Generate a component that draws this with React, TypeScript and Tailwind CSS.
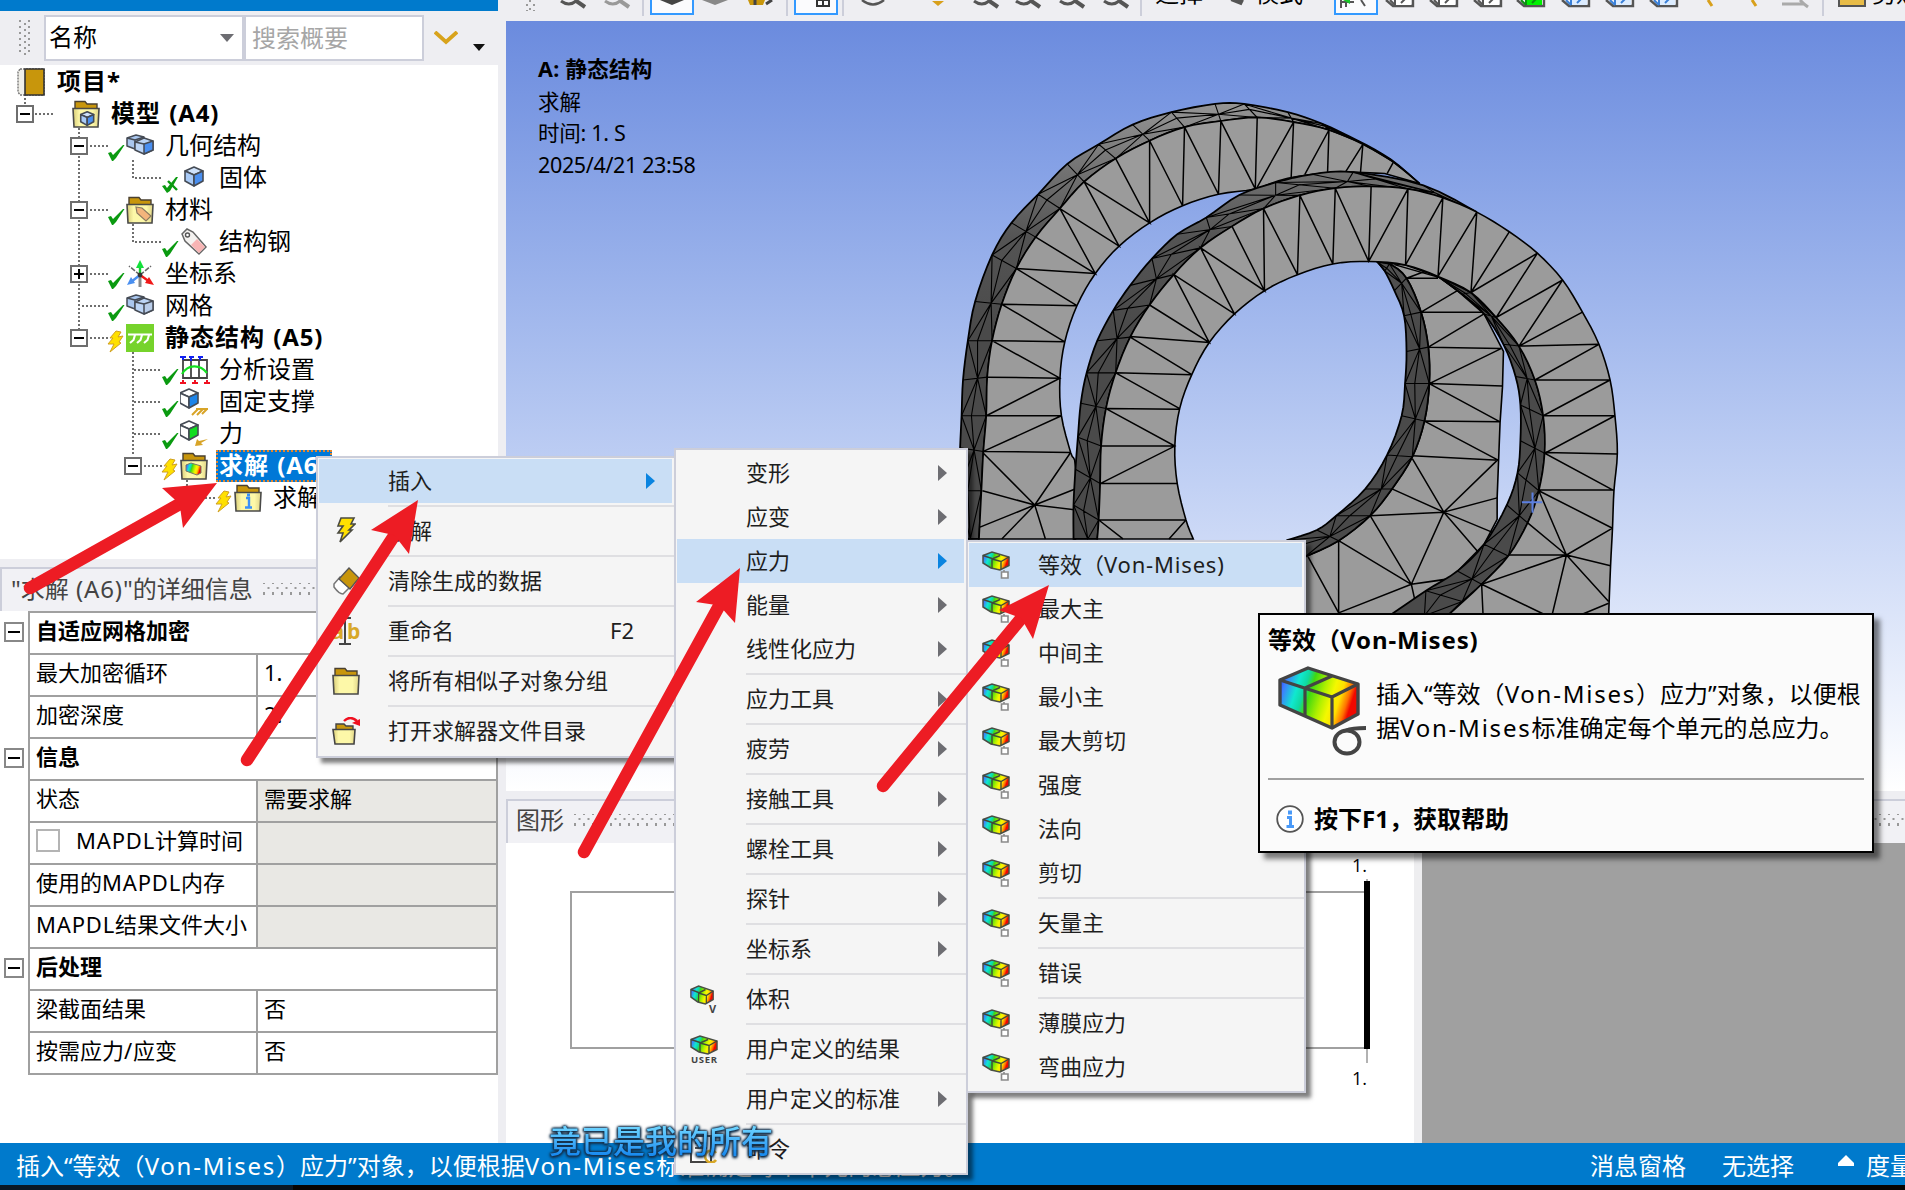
import React from "react";

type Pt = [number, number];

const pts = (list: Pt[]) => list.map((p) => p.join(",")).join(" ");

/** Sets runs of Latin letters slightly wider than the Chinese text around them. */
function Mixed({ text, loose = false }: { text: string; loose?: boolean }) {
  return (
    <>
      {text.split(/([A-Za-z0-9()*/.\- ]+)/).map((part, i) =>
        i % 2 ? (
          <span key={i} className={loose ? "tracking-[0.074em] whitespace-pre" : "tracking-[0.037em] whitespace-pre"}>{part}</span>
        ) : (
          part
        )
      )}
    </>
  );
}

/* ---------- small drawings ---------- */

function Defs() {
  return (
    <svg className="absolute h-0 w-0" aria-hidden="true">
      <defs>
        <linearGradient id="contour" x1="0" y1="0" x2="1" y2="0.25">
          <stop offset="0" stopColor="#1b2cf0" />
          <stop offset="0.12" stopColor="#3f7bff" />
          <stop offset="0.28" stopColor="#10e8d0" />
          <stop offset="0.38" stopColor="#10d8a0" />
          <stop offset="0.46" stopColor="#40d810" />
          <stop offset="0.62" stopColor="#b0f000" />
          <stop offset="0.74" stopColor="#f4f800" />
          <stop offset="0.84" stopColor="#ffe000" />
          <stop offset="0.94" stopColor="#ff7000" />
          <stop offset="1" stopColor="#f00800" />
        </linearGradient>
        <linearGradient id="paper" x1="0" y1="0" x2="1" y2="0">
          <stop offset="0" stopColor="#d8cc78" />
          <stop offset="0.25" stopColor="#fdf8a8" />
          <stop offset="0.75" stopColor="#fdf8a8" />
          <stop offset="1" stopColor="#e0d488" />
        </linearGradient>
      </defs>
    </svg>
  );
}

function ContourCube({ mark }: { mark?: string }) {
  const s = mark === "v" ? "translate(0 0) scale(0.86 1)" : undefined;
  return (
    <svg viewBox="0 0 28 28" className="h-7 w-7">
      <g transform={s}>
        <path d="M1 4.5 L10 1 L27 6 V14.5 L18 19 L9 17 L1 12 Z" fill="url(#contour)" stroke="#4a4f45" strokeWidth="1.5" />
        <path d="M1 4.5 L10 7.5 M10 17 V8 L18 4.5 M10 8 L19 10.5 L27 6 M19 10.5 V18" fill="none" stroke="#3f4a3a" strokeWidth="1.4" />
      </g>
      {mark === "box" && <path d="M19.5 21 H26 V27 H19.5 Z M22 19 V21" fill="#fff" stroke="#8a8a8a" strokeWidth="1.6" />}
      {mark === "v" && (
        <text x="19" y="28" fontSize="11" fontWeight="700" fontFamily="Open Sans" fill="#444">V</text>
      )}
      {mark === "user" && (
        <text x="1" y="28" fontSize="9.5" fontWeight="700" fontFamily="Open Sans" textLength="26" fill="#444">USER</text>
      )}
    </svg>
  );
}

function Folder({ children }: { children?: React.ReactNode }) {
  return (
    <svg viewBox="0 0 28 28" className="h-7 w-7">
      <path d="M3 8 V1.5 H13 L15 4 H25 V8" fill="#c8960c" stroke="#4a4030" strokeWidth="1.4" />
      <path d="M1 8.5 H27 L26 27 H2 Z" fill="url(#paper)" stroke="#4a4a48" strokeWidth="1.6" />
      {children}
    </svg>
  );
}

function Cube({ x = 0, y = 0, s = 1, top = "#cfe2fb", left = "#a9cbf8", right = "#4a8ff0" }: {
  x?: number; y?: number; s?: number; top?: string; left?: string; right?: string;
}) {
  return (
    <g transform={`translate(${x} ${y}) scale(${s})`} stroke="#454b55" strokeWidth={1.6 / s} strokeLinejoin="round">
      <path d="M1 5 L10 1 L19 5 L10 9 Z" fill={top} />
      <path d="M1 5 L10 9 V20 L1 15 Z" fill={left} />
      <path d="M19 5 L10 9 V20 L19 15 Z" fill={right} />
    </g>
  );
}

function TwinCubes({ pale = false }: { pale?: boolean }) {
  const right = pale ? "#b9cdea" : "#4a8ff0";
  return (
    <svg viewBox="0 0 28 28" className="h-7 w-7">
      <g stroke="#454b55" strokeWidth="1.5" strokeLinejoin="round">
        <path d="M1 6 L10 3 L18 5 V14 L9 17 L1 14 Z" fill="#a9c6ee" />
        <path d="M1 6 L9 8 L18 5 M9 8 V17" fill="none" />
        <path d="M9 10 L18 6 L27 9 V18 L18 22 L9 18 Z" fill="#bcd5f6" />
        <path d="M18 12 L27 9 V18 L18 22 Z" fill={right} />
        <path d="M9 10 L18 12" fill="none" />
      </g>
    </svg>
  );
}

const treeIcons: Record<string, React.ReactNode> = {
  book: (
    <svg viewBox="0 0 28 28" className="h-7 w-7">
      <path d="M3 1 H27 V27 H3 L1 24 V4 Z" fill="#f0efe8" stroke="#777" strokeWidth="1.4" strokeDasharray="2 1" />
      <path d="M8 1 H27 V27 H8 Z" fill="#c8960c" stroke="#333" strokeWidth="1.6" />
    </svg>
  ),
  model: <Folder><Cube x={8} y={11} s={0.72} /></Folder>,
  geometry: <TwinCubes />,
  solid: <svg viewBox="0 0 28 28" className="h-7 w-7"><Cube x={4} y={2} s={1} /></svg>,
  material: (
    <Folder>
      <path d="M10 11 L16 12 L25 20 L20 25 L11 17 Z" fill="#f3b57c" stroke="#8a7a60" strokeWidth="1.2" />
    </Folder>
  ),
  tag: (
    <svg viewBox="0 0 28 28" className="h-7 w-7">
      <path d="M2 6 L7 1 L13 4 L26 19 L19 26 L5 13 Z" fill="#f4f2f0" stroke="#666" strokeWidth="1.5" />
      <path d="M17 11 L25 19 L19 25 L11 17 Z" fill="#f7b4b4" />
      <circle cx="7.5" cy="7" r="2" fill="#fff" stroke="#555" strokeWidth="1.4" />
    </svg>
  ),
  axes: (
    <svg viewBox="0 0 28 28" className="h-7 w-7">
      <path d="M14 15 V5 M14 15 L3 6 M14 15 L25 6" stroke="#666" strokeWidth="1.6" strokeDasharray="5 1.5" />
      <path d="M14 15 V27" stroke="#888" strokeWidth="3" />
      <path d="M14 15 V6" stroke="#16c832" strokeWidth="2.4" />
      <path d="M14 0 L18 8 H10 Z" fill="#12e03a" />
      <path d="M14 15 L24 22" stroke="#f01818" strokeWidth="2.4" />
      <path d="M28 25 L19 23 L23 17 Z" fill="#f01818" />
      <path d="M14 15 L5 22" stroke="#4a8ff0" strokeWidth="2.4" />
      <path d="M1 25 L9 23 L5 17 Z" fill="#4a8ff0" />
      <circle cx="14" cy="15" r="2.4" fill="#333" />
    </svg>
  ),
  mesh: <TwinCubes pale />,
  statics: (
    <svg viewBox="0 0 28 28" className="h-7 w-7">
      <rect width="28" height="28" fill="#76d32b" />
      <path d="M2 10.5 H26 M9 11 L7.5 16 L4 19 M16 11 L14.5 16 L11 19 M23 11 L21.5 16 L18 19" fill="none" stroke="#fff" strokeWidth="2.1" />
    </svg>
  ),
  analysis: (
    <svg viewBox="0 0 30 28" className="h-7 w-[30px]">
      <path d="M3 4 V22 H27 V4 Z M11 4 V22 M19 4 V22" fill="none" stroke="#444" strokeWidth="1.8" />
      <path d="M0 1 H6 M9 1 H14 M18 1 H23 M3 1 V4 M11 1 V5 M20 1 V4" stroke="#1020f0" strokeWidth="2" />
      <path d="M2 18 C8 8 20 8 27 17" fill="none" stroke="#12e020" strokeWidth="2.2" />
      <path d="M0 27 H6 M12 27 H18 M24 27 H30 M3 24 V27 M15 24 V27 M27 24 V27" stroke="#f01020" strokeWidth="2" />
    </svg>
  ),
  fixed: (
    <svg viewBox="0 0 28 28" className="h-7 w-7">
      <Cube x={-1} y={0} top="#fff" left="#fff" right="#1d84e8" />
      <path d="M12 27 L18 21 M17 27 L23 21 M22 26 L27 21 M16 21 H28" stroke="#d8a428" strokeWidth="2" />
    </svg>
  ),
  force: (
    <svg viewBox="0 0 28 28" className="h-7 w-7">
      <Cube x={-1} y={0} top="#fff" left="#fff" right="#10dc20" />
      <path d="M15 26 L17 19 L19 21 L28 19 L21 23 L23 25 Z" fill="#d8a428" />
    </svg>
  ),
  solve: (
    <Folder>
      <path d="M6 13 L11 11 L21 14 V21 L17 23 L6 19 Z" fill="url(#contour)" stroke="#776" strokeWidth="1" />
    </Folder>
  ),
  info: (
    <Folder>
      <path d="M12 14 H15 V23 M11 23.5 H18" stroke="#3a90f8" strokeWidth="2.4" fill="none" />
      <rect x="13" y="9.5" width="3" height="3" fill="#3a90f8" />
    </Folder>
  ),
};

function Bolt({ outlined = false }: { outlined?: boolean }) {
  return outlined ? (
    <svg viewBox="0 0 20 26" className="h-[26px] w-5">
      <path d="M5 1 H18 L15 7 H19 L13 13 H16 L4 25 L7 16 H2 L7 9 H2 Z" fill="#ffe000" stroke="#4a4a40" strokeWidth="1.6" />
    </svg>
  ) : (
    <svg viewBox="0 0 18 24" className="h-6 w-[18px]">
      <path d="M9 2 L14 3 L11 8 L16 7 L12 13 L14 14 L3 23 L7 15 L1 15 L6 9 L3 9 Z" fill="#ffe000" stroke="#d0a020" />
    </svg>
  );
}

const statusMarks: Record<string, React.ReactNode> = {
  check: (
    <svg viewBox="0 0 18 18" className="mt-3.5 h-[18px] w-[18px]">
      <path d="M0 9 L3 8 L5 11 L15 1 L16.5 1 L8 14 L5 17 L4 17 Z" fill="#0a9a10" />
    </svg>
  ),
  cross: (
    <svg viewBox="0 0 18 18" className="mt-3.5 h-[18px] w-[18px]">
      <path d="M0 10 L3 9 L5 12 L14 1 L16 1 L8 15 L5 17 Z" fill="#0a9a10" />
      <path d="M6 5 L15 14" stroke="#0a9a10" strokeWidth="2.4" />
    </svg>
  ),
  bolt: <div className="mt-1.5 -ml-px"><Bolt /></div>,
};

/* ---------- tree ---------- */

interface Node { level: number; text: string; icon: string; status?: string; toggle?: string; bold?: boolean; selected?: boolean }

const nodes: Node[] = [
  { level: 1, text: "模型 (A4)", icon: "model", toggle: "-", bold: true },
  { level: 2, text: "几何结构", icon: "geometry", status: "check", toggle: "-" },
  { level: 3, text: "固体", icon: "solid", status: "cross" },
  { level: 2, text: "材料", icon: "material", status: "check", toggle: "-" },
  { level: 3, text: "结构钢", icon: "tag", status: "check" },
  { level: 2, text: "坐标系", icon: "axes", status: "check", toggle: "+" },
  { level: 2, text: "网格", icon: "mesh", status: "check" },
  { level: 2, text: "静态结构 (A5)", icon: "statics", status: "bolt", toggle: "-", bold: true },
  { level: 3, text: "分析设置", icon: "analysis", status: "check" },
  { level: 3, text: "固定支撑", icon: "fixed", status: "check" },
  { level: 3, text: "力", icon: "force", status: "check" },
  { level: 3, text: "求解 (A6)", icon: "solve", status: "bolt", toggle: "-", bold: true, selected: true },
  { level: 4, text: "求解方案信息", icon: "info", status: "bolt" },
];

function Toggle({ sign }: { sign: string }) {
  return (
    <svg viewBox="0 0 18 18" className="h-[18px] w-[18px] shrink-0">
      <rect x="1" y="1" width="16" height="16" fill="#fff" stroke="#6e6e6e" strokeWidth="2" />
      <path d={sign === "+" ? "M4 9 H14 M9 4 V14" : "M4 9 H14"} stroke="#000" strokeWidth="2" />
    </svg>
  );
}

function TreeRow({ node }: { node: Node }) {
  return (
    <div className="flex h-8 items-center whitespace-nowrap" style={{ paddingLeft: 16 + 54 * (node.level - 1) }}>
      <div className="w-[38px] shrink-0">{node.toggle && <Toggle sign={node.toggle} />}</div>
      <div className="flex h-8 w-[18px] shrink-0 items-center">{node.status && statusMarks[node.status]}</div>
      <div className="w-7 shrink-0">{treeIcons[node.icon]}</div>
      <div
        className={
          node.selected
            ? "ml-2 flex h-8 w-[116px] items-center border-2 border-dotted border-[#e8862a] bg-[#0078d7] pb-0.5 pl-px font-bold tracking-[1px] text-white"
            : node.bold
              ? "ml-[11px] pb-0.5 font-bold tracking-[1px]"
              : "ml-[11px] pb-0.5"
        }
      >
        <span className="[word-spacing:1px]"><Mixed text={node.text} /></span>
      </div>
    </div>
  );
}

function Outline() {
  return (
    <div className="flex h-[559px] flex-col bg-white">
      <div className="h-[11px] shrink-0 bg-[#007acc]" />
      <div className="flex h-[54px] shrink-0 items-start bg-[#eeeef2] pt-1 text-[24px]">
        <svg viewBox="0 0 12 38" className="mt-1 ml-[19px] h-[38px] w-3">
          {[0, 1, 2, 3, 4, 5].map((i) => (
            <g key={i} fill="#999">
              <rect x="0" y={1 + i * 6} width="2" height="2" />
              <rect x="9" y={1 + i * 6} width="2" height="2" />
              <rect x="5" y={4 + i * 6} width="2" height="2" />
            </g>
          ))}
        </svg>
        <div className="ml-[13px] flex h-[46px] w-[200px] items-center justify-between border-2 border-[#ccceda] bg-white pr-2 pl-[3px]">
          <span className="pb-0.5">名称</span>
          <svg viewBox="0 0 14 8" className="h-2 w-3.5"><path d="M0 0 H14 L7 8 Z" fill="#6d6d72" /></svg>
        </div>
        <div className="flex h-[46px] w-[180px] items-center border-2 border-[#ccceda] bg-white pl-1.5 text-[#a6a6a6]">搜索概要</div>
        <svg viewBox="0 0 24 14" className="mt-4 ml-2.5 h-3.5 w-6"><path d="M1 1 L12 11 L23 1" fill="none" stroke="#d8a31c" strokeWidth="3.8" /></svg>
        <svg viewBox="0 0 12 7" className="mt-[29px] ml-[15px] h-[7px] w-3"><path d="M0 0 H12 L6 7 Z" fill="#111" /></svg>
      </div>
      <div className="relative flex-1 text-[24px] leading-8">
        <svg className="absolute top-0 left-0 h-[493px] w-[330px]" viewBox="0 65 330 493">
          <path
            d="M25 94 V104 M35 114 H54 M79 128 V330 M90 146 H108 M133 160 V178 H162 M90 210 H108 M133 224 V242 H162 M90 274 H108 M82 306 H108 M90 338 H108 M133 352 V456 M134 370 H162 M134 402 H162 M134 434 H162 M144 466 H162 M187 480 V498 H216"
            fill="none"
            stroke="#6e6e6e"
            strokeWidth="2"
            strokeDasharray="2 2"
          />
        </svg>
        <div className="relative pt-px">
          <div className="flex h-8 items-center pl-[17px] font-bold">
            {treeIcons.book}
            <span className="ml-3 pb-0.5 tracking-[1px]"><Mixed text="项目*" /></span>
          </div>
          {nodes.map((n) => <TreeRow key={n.text} node={n} />)}
        </div>
      </div>
    </div>
  );
}

/* ---------- details ---------- */

function Grip() {
  return (
    <svg className="h-3.5 min-w-0 flex-1">
      <defs>
        <pattern id="grip" width="9" height="12" patternUnits="userSpaceOnUse">
          <rect x="0" y="0" width="2" height="2" fill="#999" />
          <rect x="4.5" y="5" width="2" height="2" fill="#999" />
          <rect x="0" y="10" width="2" height="2" fill="#999" />
        </pattern>
      </defs>
      <rect width="100%" height="12" y="1" fill="url(#grip)" />
    </svg>
  );
}

type Row = { head: string } | { name: string; value: string; grey?: boolean; box?: boolean };

const rows: Row[] = [
  { head: "自适应网格加密" },
  { name: "最大加密循环", value: "1." },
  { name: "加密深度", value: "2." },
  { head: "信息" },
  { name: "状态", value: "需要求解", grey: true },
  { name: "MAPDL计算时间", value: "", grey: true, box: true },
  { name: "使用的MAPDL内存", value: "", grey: true },
  { name: "MAPDL结果文件大小", value: "", grey: true },
  { head: "后处理" },
  { name: "梁截面结果", value: "否" },
  { name: "按需应力/应变", value: "否" },
];

function Details() {
  return (
    <div className="flex flex-1 flex-col bg-white">
      <div className="h-2 shrink-0 bg-[#eeeef2]" />
      <div className="flex h-11 shrink-0 items-center border-t-2 border-l-2 border-[#ccceda] bg-[#f1f1f5] pb-[3px] pl-[9px] text-[24px] text-[#444]">
        <span className="mr-2.5 whitespace-nowrap"><Mixed text={'"求解 (A6)"的详细信息'} /></span>
        <Grip />
      </div>
      <div className="flex flex-col border-b-2 border-transparent text-[22px]">
        {rows.map((r, i) => (
          <div key={i} className="flex h-[42px]">
            <div className="flex w-7 shrink-0 items-center pl-1">
              {"head" in r && (
                <svg viewBox="0 0 20 20" className="-mt-px h-5 w-5">
                  <rect x="1" y="1" width="18" height="18" fill="#fff" stroke="#888" strokeWidth="2" />
                  <path d="M4 10 H16" stroke="#000" strokeWidth="2" />
                </svg>
              )}
            </div>
            {"head" in r ? (
              <div className="flex flex-1 items-center border-2 border-b-0 border-[#a0a0a0] pb-1.5 pl-1.5 font-bold">{r.head}</div>
            ) : (
              <>
                <div className="flex w-[228px] items-center border-t-2 border-l-2 border-[#a0a0a0] pb-1.5 pl-1.5 whitespace-nowrap">
                  {r.box && <span className="mr-4 h-[23px] w-6 border-2 border-[#b4b4b4]" />}
                  <span><Mixed text={r.name} /></span>
                </div>
                <div
                  className={
                    r.grey
                      ? "flex flex-1 items-center border-2 border-b-0 border-[#a0a0a0] bg-[#e9e8e4] pb-1.5 pl-1.5"
                      : "flex flex-1 items-center border-2 border-b-0 border-[#a0a0a0] pb-1.5 pl-1.5"
                  }
                >
                  {r.value}
                </div>
              </>
            )}
          </div>
        ))}
        <div className="ml-7 h-0.5 bg-[#a0a0a0]" />
      </div>
    </div>
  );
}

/* ---------- toolbar ---------- */

function Toolbar() {
  const lens = (x: number, c = "#555") => (
    <g key={x}>
      <path d={`M${x} 1 Q${x + 8} 7 ${x + 15} 1`} fill="none" stroke={c} strokeWidth="3" />
      <path d={`M${x + 14} 0 L${x + 24} 7`} stroke={c} strokeWidth="4" />
    </g>
  );
  const wire = (x: number, fill = "#fff", line = "#555") => (
    <g key={x}>
      <path d={`M${x} 0 L${x + 7} 6 H${x + 27} V-4`} fill="none" stroke="#555" strokeWidth="2.4" />
      <rect x={x + 8} y="-4" width="17" height="9" fill={fill} />
      <path d={`M${x + 9} 0 V5 M${x + 15} 3 L${x + 19} -1 M${x + 4} 0 L${x + 9} 5`} stroke={line} strokeWidth="2" />
    </g>
  );
  return (
    <div className="relative h-[21px] shrink-0 overflow-hidden bg-[#eeeef2]">
      <svg viewBox="498 0 1407 21" className="block h-[21px] w-[1407px]">
        <g fill="#999">
          <rect x="526" y="4" width="2" height="2" /><rect x="533" y="4" width="2" height="2" />
          <rect x="529" y="0" width="2" height="2" /><rect x="529" y="8" width="2" height="2" />
          <rect x="526" y="10" width="2" height="1" /><rect x="533" y="10" width="2" height="1" />
        </g>
        {lens(561)}
        {lens(605, "#999")}
        {[643, 787, 843, 1141, 1823].map((x) => <path key={x} d={`M${x} 0 V16`} stroke="#ccceda" strokeWidth="2" />)}
        {[651, 795, 1335].map((x) => <rect key={x} x={x} y="-4" width="42" height="18" fill="#fbfbfd" stroke="#3399ff" strokeWidth="2" />)}
        <path d="M660 0 L672 5 L684 0 Z" fill="#444" />
        <path d="M702 0 L715 5 L728 0 Z" fill="#888" />
        <path d="M748 0 L750 5 H763 L765 0 Z" fill="#c8960c" /><path d="M755 0 V5 M766 4 L772 0" stroke="#444" strokeWidth="3" />
        <path d="M817 -2 V6 H829 V-2 M817 0 H829 M823 -2 V6" fill="none" stroke="#333" strokeWidth="2" />
        <path d="M862 0 Q873 9 884 0" fill="none" stroke="#555" strokeWidth="2.4" />
        <path d="M932 1 H944 L938 6 Z" fill="#d8a01c" />
        {[974, 1016, 1060, 1104].map((x) => lens(x))}
        <path d="M1231 0 L1241 4 L1243 0" fill="#555" stroke="#555" strokeWidth="2" />
        <path d="M1341 0 V8 M1346 1 V7 M1340 2 H1354 M1361 0 L1365 6" stroke="#555" strokeWidth="2" />
        <path d="M1343 0 L1350 4 L1350 0 Z" fill="#18c828" />
        {[1386, 1430, 1474].map((x) => wire(x))}
        {wire(1517, "#00f000", "#0a9010")}
        {[1562, 1606, 1650].map((x) => wire(x, "#dcecff", "#3a80d8"))}
        <path d="M1708 0 L1712 6 M1752 0 L1756 6" stroke="#d8a01c" strokeWidth="3" />
        <path d="M1782 4 H1804 L1800 0 M1804 4 L1808 7" fill="none" stroke="#aaa" strokeWidth="3" />
        <rect x="1839" y="-6" width="26" height="12" fill="#e8bc48" stroke="#555" strokeWidth="2" />
      </svg>
      <div className="absolute -top-[23px] left-[657px] flex text-[24px] leading-8 whitespace-nowrap">
        <span className="w-[100px]">选择</span>
        <span className="w-[617px]">模式</span>
        <span>剪贴板</span>
      </div>
    </div>
  );
}

/* ---------- 3D model ---------- */

const backOuter: Pt[] = [[163, 1285], [168, 1150], [172, 1040], [178, 940], [180, 832], [190, 730], [210, 628], [240, 528], [280, 440], [330, 360], [380, 285], [445, 220], [515, 170], [587, 132], [662, 115], [737, 105], [812, 118], [885, 140], [955, 180], [1018, 230], [1072, 290]];
const backRim: Pt[] = [[118, 1285], [121, 1150], [124, 1030], [127, 940], [130, 840], [140, 730], [155, 620], [190, 490], [230, 400], [285, 320], [345, 235], [410, 180], [480, 125], [560, 90], [650, 67], [710, 67], [800, 90], [870, 122], [945, 170], [1012, 222], [1072, 290]];
const backInner: Pt[] = [[1000, 262], [900, 258], [800, 275], [733, 305], [657, 320], [583, 352], [515, 400], [452, 465], [403, 542], [365, 632], [340, 733], [330, 835], [333, 940], [352, 1043], [362, 1085], [362, 1285]];

const frontOuter: Pt[] = [[407, 1285], [410, 1232], [413, 1130], [415, 1025], [425, 920], [445, 820], [475, 720], [515, 630], [565, 545], [620, 470], [685, 410], [750, 360], [825, 323], [898, 303], [972, 298], [1048, 305], [1120, 330], [1190, 370]];
const frontRight: Pt[] = [[1190, 370], [1257, 425], [1315, 485], [1367, 560], [1408, 650], [1442, 740], [1465, 840], [1475, 940], [1480, 1045], [1473, 1150], [1470, 1255], [1466, 1360], [1462, 1500]];
const frontRim: Pt[] = [[358, 1285], [358, 1190], [362, 1090], [367, 1000], [373, 905], [385, 820], [407, 730], [440, 645], [475, 575], [520, 500], [572, 432], [632, 385], [700, 322], [775, 287], [850, 264], [935, 258], [1080, 295], [1190, 370]];
const holeEdge: Pt[] = [[1130, 1500], [1200, 1412], [1255, 1333], [1295, 1240], [1318, 1150], [1330, 1045], [1327, 940], [1310, 840], [1277, 745], [1230, 665], [1178, 595], [1110, 550], [1043, 518], [967, 508], [893, 515], [820, 545], [752, 590], [690, 655], [638, 735], [602, 825], [577, 920], [567, 1025], [572, 1130], [590, 1232], [605, 1285]];

const backHoleFace: Pt[] = [[985, 510], [1010, 515], [1045, 555], [1075, 650], [1090, 748], [1092, 850], [1082, 955], [1057, 1055], [1015, 1145], [970, 1220], [905, 1290], [836, 1335]];
const backHoleRim: Pt[] = [[985, 510], [1000, 535], [1020, 590], [1040, 660], [1045, 760], [1042, 850], [1035, 940], [1005, 1050], [960, 1145], [900, 1220], [860, 1260], [800, 1288]];
const frontHoleRim: Pt[] = [[1110, 550], [1160, 600], [1205, 655], [1245, 740], [1270, 830], [1280, 910], [1280, 1010], [1274, 1100], [1252, 1190], [1205, 1300], [1150, 1375], [1085, 1430], [1010, 1500]];
const frontHoleFace: Pt[] = [[1110, 550], [1178, 595], [1230, 665], [1277, 745], [1310, 840], [1327, 940], [1330, 1045], [1318, 1150], [1295, 1240], [1255, 1333], [1200, 1412], [1160, 1460], [1130, 1500]];

/** Catmull-Rom subdivision, so that the outlines read as curves. */
function smooth(p: Pt[]): Pt[] {
  const out: Pt[] = [];
  for (let i = 0; i < p.length - 1; i++) {
    const a = p[Math.max(0, i - 1)];
    const b = p[i];
    const c = p[i + 1];
    const d = p[Math.min(p.length - 1, i + 2)];
    for (const t of [0, 0.25, 0.5, 0.75]) {
      const f = (k: 0 | 1) =>
        0.5 * (2 * b[k] + (c[k] - a[k]) * t + (2 * a[k] - 5 * b[k] + 4 * c[k] - d[k]) * t * t + (3 * b[k] - a[k] - 3 * c[k] + d[k]) * t * t * t);
      out.push([f(0), f(1)]);
    }
  }
  out.push(p[p.length - 1]);
  return out;
}

function bandMesh(a: Pt[], b: Pt[]) {
  let d = "";
  const mix = (p: Pt, q: Pt, t: number): Pt => [p[0] + (q[0] - p[0]) * t, p[1] + (q[1] - p[1]) * t];
  for (let i = 0; i < a.length - 1; i++) {
    const m0 = mix(a[i], b[i], i % 2 ? 0.4 : 0.6);
    const m1 = mix(a[i + 1], b[i + 1], i % 2 ? 0.6 : 0.4);
    d += `M${a[i]} L${b[i]} M${m0} L${m1} `;
    d += i % 2 ? `M${a[i]} L${m1} L${b[i]} ` : `M${a[i + 1]} L${m0} L${b[i + 1]} `;
  }
  return d;
}

const faceMesh =
  "M172 1040 L352 1043 M178 940 H333 M180 832 L330 835 M190 730 L340 733 M210 628 L365 632 M240 528 L403 542 M515 170 V400 M587 132 L583 352 M662 115 L657 320 M737 105 L733 305 M812 118 L807 275 M885 140 L882 265 M955 180 L950 260 " +
  "M172 1040 L333 940 M178 940 L330 835 L190 730 M210 628 L340 733 M240 528 L365 632 M280 440 L403 542 L330 360 L452 465 L380 285 L515 400 L445 220 M515 170 L583 352 M587 132 L657 320 M662 115 L733 305 M812 118 L737 300 M885 140 L835 265 M955 180 L918 260 M1018 230 L1005 262 " +
  "M278 1190 L172 1045 M278 1190 L352 1043 M278 1190 L170 1150 M278 1190 L360 1146 M278 1190 L360 1203 M278 1190 L165 1252 M278 1190 L210 1285 M278 1190 L300 1285";
const backRightMesh =
  "M1045 555 H1110 M1075 650 H1205 M1090 748 L1240 752 M1092 850 L1243 857 M1082 955 L1238 957 M1057 1052 L1235 1065 M1045 555 L1085 535 M1020 517 L1110 552 M1075 650 L1150 590 M1090 748 L1205 655 M1092 850 L1240 752 M1092 850 L1238 957 M1082 955 L1235 1065 " +
  "M1122 1210 L1057 1060 M1122 1210 L1232 1065 M1122 1210 L1232 1170 M1122 1210 L1015 1145 M1122 1210 L970 1220 M1122 1210 L1055 1412 M1122 1210 L1225 1268 M1122 1210 L1195 1325 " +
  "M905 1290 V1500 M905 1290 L1055 1412 M970 1220 L1055 1412 M842 1335 L905 1492 M1055 1412 L905 1492 M1055 1412 L1180 1387 M1055 1412 L1062 1455 M1055 1412 L1120 1400";
const frontMesh =
  "M410 1232 H590 M413 1130 H572 M415 1025 H567 M425 920 L577 922 M445 820 L602 825 M475 718 L638 735 M750 360 L752 590 M825 323 L820 545 M898 303 L893 515 M972 298 L967 508 M1048 305 L1043 518 M1120 330 L1110 550 M1190 370 L1178 595 M1442 740 L1277 745 M1465 840 H1310 M1475 940 H1327 M1480 1047 L1330 1043 M1473 1148 H1318 " +
  "M410 1232 L460 1285 M590 1232 L555 1285 M413 1130 L567 1025 L425 920 M577 920 L445 820 M602 825 L475 720 M515 630 L638 735 L565 545 L690 655 L620 470 L752 590 L685 410 M750 360 L820 545 M825 323 L893 515 M898 303 L967 508 L1048 305 M1120 330 L1043 518 M1190 370 L1110 550 " +
  "M1257 425 L1178 595 L1315 485 L1230 665 L1367 560 L1277 745 L1408 650 M1230 665 L1178 595 M1442 740 L1310 840 M1465 840 L1327 940 M1475 940 L1330 1045 L1473 1150 M1318 1150 L1470 1255 " +
  "M1375 1330 L1318 1150 M1375 1330 L1470 1255 M1375 1330 L1466 1360 M1375 1330 L1295 1240 M1375 1330 H1255 M1375 1330 L1200 1412 M1375 1330 L1345 1500 M1375 1330 L1462 1460 M1203 1500 L1200 1412 L1335 1500 M1462 1465 L1400 1500";

function Model() {
  const line = { fill: "none", stroke: "#000", strokeWidth: 1.5, vectorEffect: "non-scaling-stroke" as const };
  const dark = { fill: "url(#rimShade)", stroke: "#000", strokeWidth: 1.8, vectorEffect: "non-scaling-stroke" as const };
  const face = { fill: "#9b9b9b", stroke: "#000", strokeWidth: 1.6, vectorEffect: "non-scaling-stroke" as const };
  const ring = (a: Pt[], b: Pt[]) => pts([...smooth(a), ...smooth([...b].reverse())]);
  return (
    <svg viewBox="0 0 1568 1568" preserveAspectRatio="none" className="absolute top-[59px] left-[394px] h-[560px] w-[760px]">
      <defs>
        <linearGradient id="rimShade" gradientUnits="userSpaceOnUse" x1="0" y1="60" x2="0" y2="700">
          <stop offset="0" stopColor="#969696" />
          <stop offset="0.25" stopColor="#787878" />
          <stop offset="0.6" stopColor="#545454" />
          <stop offset="1" stopColor="#4a4a4a" />
        </linearGradient>
      </defs>
      <polygon points={ring(backRim, backOuter)} {...dark} />
      <polygon points={pts([...smooth(backOuter), ...smooth(backInner)])} {...face} />
      <path d={bandMesh(backRim, backOuter)} {...line} strokeWidth={1.1} />
      <path d={faceMesh} {...line} />
      <polygon
        points={pts([...smooth(backHoleFace), [836, 1500], [1060, 1500], [1205, 1300], [1232, 1230], [1232, 1170], [1235, 1065], [1238, 960], [1243, 860], [1245, 760], [1205, 655], [1150, 590], [1110, 550], [1043, 518]])}
        {...face}
      />
      <polygon points={ring(backHoleRim, backHoleFace)} {...dark} />
      <path d={bandMesh(backHoleRim, backHoleFace)} {...line} strokeWidth={1.1} />
      <path d={backRightMesh} {...line} />
      <polygon points={ring(frontHoleRim, frontHoleFace)} {...dark} />
      <path d={bandMesh(frontHoleRim, frontHoleFace)} {...line} strokeWidth={1.1} />
      <polygon points={ring(frontRim, frontOuter)} {...dark} />
      <path d={bandMesh(frontRim, frontOuter)} {...line} strokeWidth={1.1} />
      <polygon points={pts([...smooth([...frontOuter, ...frontRight.slice(1)]), ...smooth(holeEdge)])} {...face} />
      <path d={frontMesh} {...line} />
      <path d="M1283 1182 H1325 M1305 1155 V1212" fill="none" stroke="#5b7fe0" strokeWidth="2" vectorEffect="non-scaling-stroke" />
    </svg>
  );
}

function Viewer() {
  return (
    <div className="relative h-[770px] shrink-0 overflow-hidden bg-gradient-to-b from-[#6b8bde] to-[#ffffff] pt-8 pl-8 text-[21.5px] leading-8">
      <Model />
      <div className="font-bold tracking-[0.3px]">A: 静态结构</div>
      <div className="mt-px">求解</div>
      <div className="-mt-px tracking-[-0.3px]">时间: 1. S</div>
      <div className="tracking-[-0.35px]">2025/4/21 23:58</div>
    </div>
  );
}

function Graph() {
  return (
    <div className="flex min-h-0 flex-1 flex-col">
      <div className="flex h-11 shrink-0 items-center border-t-2 border-l-2 border-[#ccceda] bg-[#f1f1f5] pb-1 pl-2 text-[24px] text-[#444]">
        <span className="mr-2.5">图形</span>
        <Grip />
      </div>
      <div className="flex min-h-0 flex-1">
        <div className="w-[908px] bg-white">
          <svg viewBox="506 843 908 300" className="h-[300px] w-[908px] text-[18px]">
            <rect x="571" y="892" width="795" height="156" fill="none" stroke="#a0a0a0" strokeWidth="2" />
            <path d="M1367 879 V1063" stroke="#999" strokeWidth="1.5" />
            <path d="M1367 881 V1049" stroke="#000" strokeWidth="6" />
            <text x="1352" y="872" fontFamily="Open Sans">1.</text>
            <text x="1352" y="1085" fontFamily="Open Sans">1.</text>
          </svg>
        </div>
        <div className="w-2 bg-[#eeeef0]" />
        <div className="flex-1 bg-[#a0a0a0]" />
      </div>
    </div>
  );
}

/* ---------- menus ---------- */

interface Item { text: string; icon?: React.ReactNode; arrow?: boolean; sep?: boolean; active?: boolean; key2?: string }

function MenuList({ items }: { items: Item[] }) {
  return (
    <>
      {items.map((it) => (
        <React.Fragment key={it.text}>
          <div
            className={
              it.active
                ? "mr-0.5 ml-px flex h-11 items-center bg-[#c9def5] pl-[13px]"
                : "mr-0.5 ml-px flex h-11 items-center pl-[13px]"
            }
          >
            <div className="h-7 w-7 shrink-0">{it.icon}</div>
            <span className="ml-7 flex-1 pb-0.5"><Mixed text={it.text} /></span>
            {it.key2 && <span className="mr-[38px] pb-0.5">{it.key2}</span>}
            {it.arrow && (
              <svg viewBox="0 0 9 16" className="mr-[17px] h-4 w-[9px]">
                <path d="M0 0 L9 8 L0 16 Z" fill={it.active ? "#0a84e0" : "#6d6d72"} />
              </svg>
            )}
          </div>
          {it.sep && <div className="mt-0.5 mb-0.5 ml-[70px] h-0.5 bg-[#dfdfe2]" />}
        </React.Fragment>
      ))}
    </>
  );
}

const contextItems: Item[] = [
  { text: "插入", arrow: true, active: true, sep: true },
  { text: "求解", icon: <div className="pl-1"><Bolt outlined /></div>, sep: true },
  {
    text: "清除生成的数据", sep: true,
    icon: (
      <svg viewBox="0 0 28 28" className="h-7 w-7">
        <path d="M2 17 L8 10 L18 20 L11 27 Q7 27 2 20 Z" fill="#fff" stroke="#777" strokeWidth="1.5" />
        <path d="M17 1 L27 11 L18 22 L7 12 Z" fill="#c8960c" stroke="#555" strokeWidth="1.4" />
      </svg>
    ),
  },
  {
    text: "重命名", key2: "F2", sep: true,
    icon: (
      <svg viewBox="0 0 28 28" className="h-7 w-7">
        <text x="-1" y="22" fontSize="22" fontWeight="700" fontFamily="Open Sans" fill="#d8a828">a</text>
        <text x="15" y="22" fontSize="21" fontWeight="700" fontFamily="Open Sans" fill="#d8a828">b</text>
        <path d="M13 2 V26 M7 1 H19 M7 27 H19" stroke="#444" strokeWidth="2" />
      </svg>
    ),
  },
  { text: "将所有相似子对象分组", icon: <Folder />, sep: true },
  {
    text: "打开求解器文件目录",
    icon: (
      <svg viewBox="0 0 28 28" className="h-7 w-7">
        <path d="M4 12 V7 H12 L14 9 H21 V12" fill="#c8960c" stroke="#444" strokeWidth="1.4" />
        <path d="M1 12.5 H23 L22 27 H3 Z" fill="url(#paper)" stroke="#444" strokeWidth="1.6" />
        <path d="M12 4 Q18 -2 25 4" fill="none" stroke="#f01020" strokeWidth="2.4" />
        <path d="M28 2 V9 L20 6 Z" fill="#f01020" />
      </svg>
    ),
  },
];

const insertItems: Item[] = [
  { text: "变形", arrow: true },
  { text: "应变", arrow: true },
  { text: "应力", arrow: true, active: true },
  { text: "能量", arrow: true },
  { text: "线性化应力", arrow: true, sep: true },
  { text: "应力工具", arrow: true, sep: true },
  { text: "疲劳", arrow: true, sep: true },
  { text: "接触工具", arrow: true, sep: true },
  { text: "螺栓工具", arrow: true, sep: true },
  { text: "探针", arrow: true, sep: true },
  { text: "坐标系", arrow: true, sep: true },
  { text: "体积", icon: <ContourCube mark="v" />, sep: true },
  { text: "用户定义的结果", icon: <ContourCube mark="user" />, sep: true },
  { text: "用户定义的标准", arrow: true, sep: true },
  {
    text: "命令",
    icon: (
      <svg viewBox="0 0 28 28" className="h-7 w-7">
        <path d="M1 1 H21 V27 H1 Z" fill="#fff" stroke="#444" strokeWidth="2" />
        <path d="M5 8 H17 M5 13 H17" stroke="#555" strokeWidth="2" />
        <path d="M26 18 A6 6 0 1 0 26 25" fill="none" stroke="#d8a828" strokeWidth="2.6" />
      </svg>
    ),
  },
];

const stressItems: Item[] = [
  { text: "等效（Von-Mises)", active: true },
  { text: "最大主" },
  { text: "中间主" },
  { text: "最小主" },
  { text: "最大剪切" },
  { text: "强度" },
  { text: "法向" },
  { text: "剪切", sep: true },
  { text: "矢量主", sep: true },
  { text: "错误", sep: true },
  { text: "薄膜应力" },
  { text: "弯曲应力" },
].map((it) => ({ ...it, icon: <ContourCube mark="box" /> }));

function Tooltip() {
  return (
    <div className="absolute top-[613px] left-[1258px] flex h-[240px] w-[616px] flex-col border-2 border-black bg-[#fbfbfb] px-2 pt-2 text-[24px] text-black shadow-[6px_6px_5px_rgba(0,0,0,0.5)]">
      <div className="-mt-px leading-9 font-bold"><Mixed text="等效（Von-Mises)" /></div>
      <div className="mt-2 flex h-[112px]">
        <svg viewBox="0 0 90 90" className="ml-2.5 h-[90px] w-[90px] shrink-0">
          <path d="M2 14 L30 2 L80 18 V48 L54 62 L2 39 Z" fill="url(#contour)" stroke="#444" strokeWidth="3.4" strokeLinejoin="round" />
          <path d="M2 14 L54 31 L80 18 M54 31 V62 M27 22 V50 M27 22 L54 10" fill="none" stroke="#444" strokeWidth="3.2" />
          <ellipse cx="69" cy="76" rx="12.5" ry="11.5" fill="none" stroke="#444" strokeWidth="4" />
          <path d="M68 64.5 Q74 62 88 62" fill="none" stroke="#444" strokeWidth="4" />
        </svg>
        <div className="ml-2 pt-[11px] leading-[34px] whitespace-nowrap">
          <div><Mixed loose text="插入“等效（Von-Mises）应力”对象，以便根" /></div>
          <div><Mixed loose text="据Von-Mises标准确定每个单元的总应力。" /></div>
        </div>
      </div>
      <div className="h-0.5 bg-[#a0a0a0]" />
      <div className="flex flex-1 items-center pt-1.5 pl-2 font-bold">
        <svg viewBox="0 0 28 28" className="h-7 w-7">
          <circle cx="14" cy="14" r="12.8" fill="#fff" stroke="#555" strokeWidth="1.8" />
          <path d="M11 12.5 H14.5 V21 M10.5 21.5 H18" fill="none" stroke="#4a9af8" strokeWidth="3" />
          <rect x="12" y="5.5" width="4" height="4" fill="#4a9af8" />
        </svg>
        <span className="ml-2.5">按下F1，获取帮助</span>
      </div>
    </div>
  );
}

/* ---------- annotation arrows ---------- */

const arrows: { tail: Pt; tip: Pt; a: Pt; b: Pt }[] = [
  { tail: [30, 588], tip: [217, 483], a: [162, 488], b: [183, 528] },
  { tail: [247, 760], tip: [418, 500], a: [371, 530], b: [409, 554] },
  { tail: [584, 852], tip: [740, 568], a: [696, 602], b: [735, 623] },
  { tail: [883, 786], tip: [1049, 585], a: [999, 610], b: [1033, 639] },
];

function Arrows() {
  return (
    <svg className="pointer-events-none absolute top-0 left-0 h-[1190px] w-[1905px]" viewBox="0 0 1905 1190">
      {arrows.map(({ tail, tip, a, b }) => {
        const mid: Pt = [(a[0] + b[0]) / 2, (a[1] + b[1]) / 2];
        const notch: Pt = [mid[0] + (tip[0] - mid[0]) * 0.16, mid[1] + (tip[1] - mid[1]) * 0.16];
        return (
          <g key={tip.join()} fill="#ed1c24">
            <path d={`M${tail} L${notch}`} stroke="#ed1c24" strokeWidth="12.5" strokeLinecap="round" />
            <polygon points={pts([tip, a, notch, b])} />
          </g>
        );
      })}
    </svg>
  );
}

const menuShell = "absolute flex flex-col border-2 border-[#ccceda] bg-[#f5f5f5] pt-px text-[22px] leading-8 whitespace-nowrap text-[#1e1e1e] shadow-[5px_5px_4px_rgba(0,0,0,0.5)]";

export default function App() {
  return (
    <div className="relative flex h-[1190px] w-[1905px] flex-col overflow-hidden bg-[#eeeef2] font-['Noto_Sans','Noto_Sans_CJK_SC',sans-serif] text-black">
      <Defs />
      <div className="flex h-[1143px] shrink-0">
        <div className="flex w-[498px] shrink-0 flex-col">
          <Outline />
          <Details />
        </div>
        <div className="flex min-w-0 flex-1 flex-col">
          <Toolbar />
          <div className="flex min-h-0 flex-1 flex-col gap-2 pl-2">
            <Viewer />
            <Graph />
          </div>
        </div>
      </div>
      <div className="flex h-[42px] shrink-0 items-center bg-[#007acc] pt-[3px] pl-4 text-[24px] whitespace-nowrap text-white">
        <span className="w-[1574px] shrink-0"><Mixed loose text="插入“等效（Von-Mises）应力”对象，以便根据Von-Mises标准确定每个单元的总应力。" /></span>
        <span className="w-[132px] shrink-0">消息窗格</span>
        <span className="w-[116px] shrink-0">无选择</span>
        <svg viewBox="0 0 16 11" className="mb-2.5 h-[11px] w-4 shrink-0"><path d="M8 0 L16 8 V11 H0 V8 Z" fill="#fff" /></svg>
        <span className="ml-3 shrink-0">度量</span>
      </div>
      <div className="flex flex-1 bg-[#080402]"><div className="w-[293px] bg-[#0a1826]" /></div>

      <div className={`${menuShell} top-[456px] left-[316px] h-[302px] w-[360px]`}><MenuList items={contextItems} /></div>
      <div className={`${menuShell} top-[448px] left-[674px] h-[727px] w-[294px]`}><MenuList items={insertItems} /></div>
      <div className={`${menuShell} top-[540px] left-[966px] h-[553px] w-[340px]`}><MenuList items={stressItems} /></div>
      <Tooltip />
      <Arrows />
      <div className="absolute top-[1119px] left-[549px] bg-gradient-to-b from-[#6ad2ff] from-20% to-[#1a8cf0] to-80% bg-clip-text text-[32px] leading-[44px] font-medium whitespace-nowrap text-transparent [filter:drop-shadow(0_0_1px_#12304c)_drop-shadow(0_0_1px_#12304c)_drop-shadow(0_1px_1px_#12304c)]">
        竟已是我的所有
      </div>
    </div>
  );
}
